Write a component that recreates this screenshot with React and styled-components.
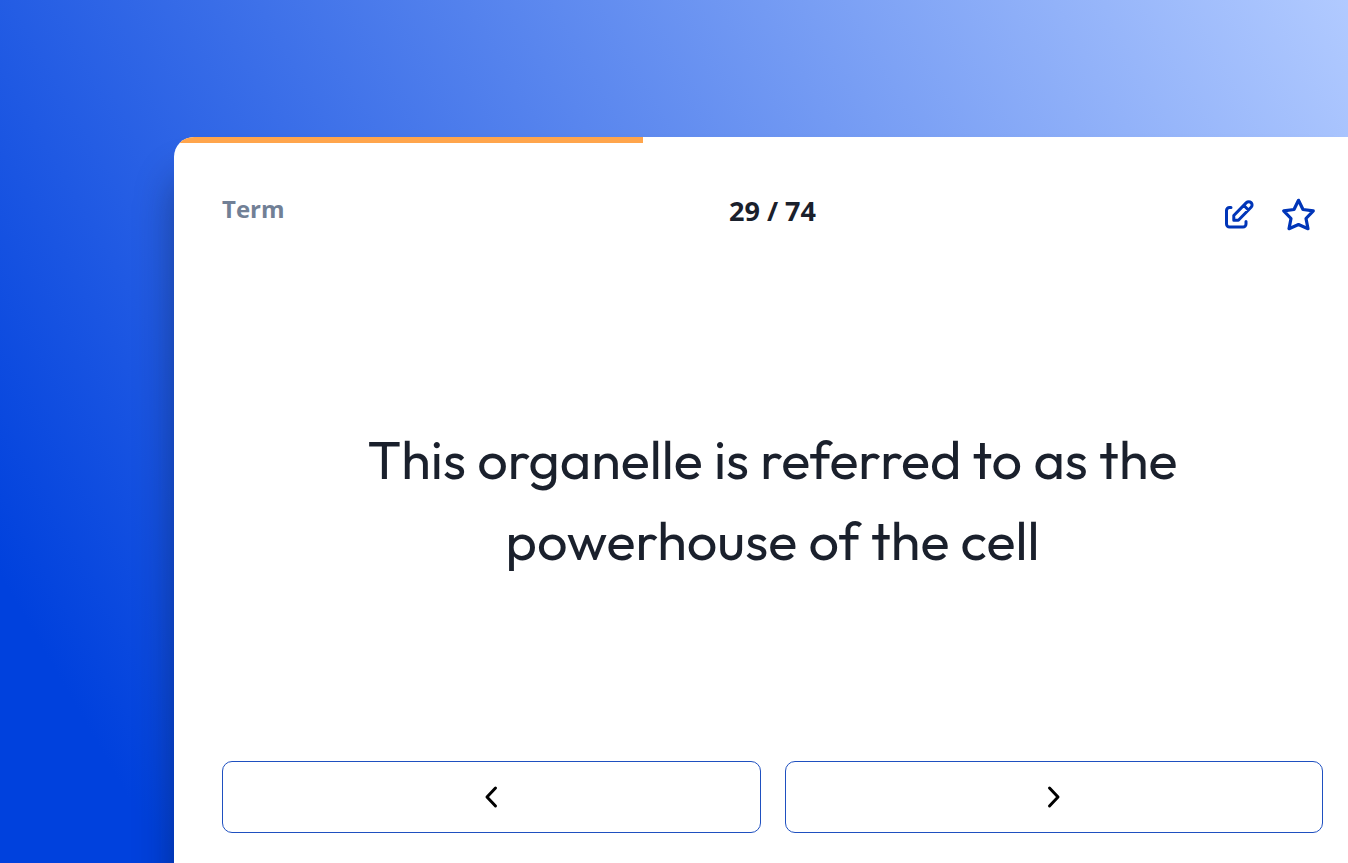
import React from "react";
import styled, { createGlobalStyle } from "styled-components";

const GlobalStyle = createGlobalStyle`
  *, *::before, *::after { box-sizing: border-box; }
  body { margin: 0; font-family: "Open Sans", "Noto Sans", sans-serif; color: #1a202c; }
`;

const Page = styled.main`
  display: flex;
  min-height: 100vh;
  padding: 137px 0 0 174px;
  overflow: hidden;
  background: linear-gradient(60deg, #0041dd 9%, #b1caff 100%);
`;

const Card = styled.article`
  flex: 1;
  display: flex;
  flex-direction: column;
  overflow: hidden;
  background: #fff;
  border-radius: 20px 0 0 0;
  box-shadow: 0 40px 38px rgba(10, 20, 40, 0.42);
`;

const Track = styled.div`
  height: 6px;
`;

const Progress = styled.div`
  height: 100%;
  background: #ffa54c;
`;

const Body = styled.div`
  flex: 1;
  display: flex;
  flex-direction: column;
  padding: 48px 25px 30px 48px;
`;

const Header = styled.header`
  display: grid;
  grid-template-columns: 1fr auto 1fr;
  align-items: start;
`;

const Side = styled.span`
  font-size: 24px;
  line-height: 36px;
  font-weight: 700;
  color: #718096;
`;

const Counter = styled.span`
  font-size: 27px;
  line-height: 40px;
  font-weight: 700;
`;

const Actions = styled.div`
  display: flex;
  justify-content: flex-end;
  gap: 12px;
`;

const IconButton = styled.button`
  display: grid;
  place-items: center;
  width: 48px;
  height: 48px;
  padding: 0;
  border: 0;
  background: none;
  color: #0035b8;
  cursor: pointer;
`;

const Prompt = styled.h1`
  flex: 1;
  display: grid;
  place-items: center;
  margin: 0;
  padding: 0 120px;
  font-family: Outfit, Lato, sans-serif;
  font-size: 54px;
  line-height: 81px;
  font-weight: 400;
  text-align: center;
`;

const Nav = styled.nav`
  display: grid;
  grid-template-columns: 1fr 1fr;
  gap: 24px;
`;

const NavButton = styled.button`
  display: grid;
  place-items: center;
  height: 72px;
  padding: 0;
  border: 1px solid #1f50c0;
  border-radius: 10px;
  background: #fff;
  color: #000;
  cursor: pointer;
`;

const Icon = ({ size = 36, children, stroke = 3 }) => (
  <svg width={size} height={size} viewBox={`0 0 ${size} ${size}`} fill="none" stroke="currentColor"
    strokeWidth={stroke} strokeLinecap="round" strokeLinejoin="round" aria-hidden="true">
    {children}
  </svg>
);

const position = 29;
const total = 74;

export default function App() {
  return (
    <>
      <GlobalStyle />
      <Page>
        <Card>
          <Track role="progressbar" aria-label="Progress" aria-valuenow={position} aria-valuemax={total}>
            <Progress style={{ width: `${(position / total) * 102}%` }} />
          </Track>
          <Body>
            <Header>
              <Side>Term</Side>
              <Counter>{position} / {total}</Counter>
              <Actions>
                <IconButton aria-label="Edit card">
                  <Icon>
                    <path d="M10 10.500H8.500a3 3 0 0 0-3 3V27a3 3 0 0 0 3 3H22a3 3 0 0 0 3-3v-2.500" />
                    <path d="M12.800 18.500L25.400 5.600a3.300 3.300 0 0 1 4.700 4.700L17.400 23.200H12.800z M22.700 8.300l4.700 4.700" />
                  </Icon>
                </IconButton>
                <IconButton aria-label="Star card">
                  <Icon stroke={3.2}>
                    <path d="M17.500 3.300L22 12.500L32.300 13.800L25 21.500L27 31.700L17.500 27.500L8 31.700L10 21.500L2.700 13.800L13 12.500Z" />
                  </Icon>
                </IconButton>
              </Actions>
            </Header>
            <Prompt>This organelle is referred to as the powerhouse of the cell</Prompt>
            <Nav aria-label="Cards">
              <NavButton aria-label="Previous card"><Icon><path d="M22.500 9L14 18l8.500 9" /></Icon></NavButton>
              <NavButton aria-label="Next card"><Icon><path d="M13.500 9L22 18l-8.500 9" /></Icon></NavButton>
            </Nav>
          </Body>
        </Card>
      </Page>
    </>
  );
}
